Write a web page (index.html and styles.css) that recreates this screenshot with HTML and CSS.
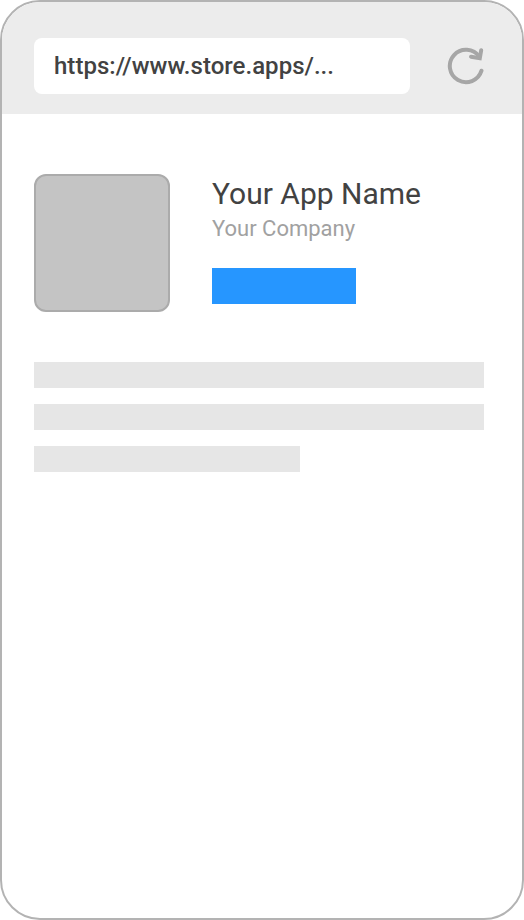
FILE: index.html
```html
<!DOCTYPE html>
<html lang="en">
<head>
<meta charset="utf-8">
<title>App store</title>
<link rel="stylesheet" href="styles.css">
</head>
<body>
<div class="phone">
  <header class="bar">
    <div class="address">https://www.store.apps/...</div>
    <svg class="reload" viewBox="0 0 40 40" fill="none" stroke="#a6a6a6" stroke-width="4" stroke-linecap="round" stroke-linejoin="miter">
      <path d="M35.5 24.7A16.2 16.2 0 1 1 33.3 10.7"/>
      <path d="M35.2 4.2L33.8 12.2L25 10.7"/>
    </svg>
  </header>
  <main class="content">
    <section class="app">
      <div class="app-icon"></div>
      <div class="details">
        <h1 class="name">Your App Name</h1>
        <p class="company">Your Company</p>
        <div class="button"></div>
      </div>
    </section>
    <section class="description">
      <div class="line"></div>
      <div class="line"></div>
      <div class="line line-short"></div>
    </section>
  </main>
</div>
</body>
</html>
```
FILE: styles.css
```css
* { box-sizing: border-box; }
body { margin: 0; background: #fff; font-family: Roboto, sans-serif; }
.phone { width: 524px; height: 920px; border: 2px solid #b3b3b3; border-radius: 40px; overflow: hidden; background: #fff; }
.bar { display: flex; height: 112px; padding: 36px 32px 0; background: #ececec; }
.address { width: 376px; height: 56px; padding-left: 20px; border-radius: 8px; background: #fff; color: #424242; font-size: 24px; font-weight: 500; line-height: 56px; letter-spacing: 0.03px; }
.reload { width: 40px; height: 40px; margin: 8px 0 0 36px; }
.content { padding: 60px 38px 0 32px; }
.app { display: flex; gap: 42px; height: 138px; }
.app-icon { width: 136px; height: 138px; border: 2px solid #ababab; border-radius: 12px; background: #c4c4c4; }
.name { margin: 0; color: #424242; font-size: 30px; font-weight: 400; line-height: 40px; }
.company { margin: 0; color: #a1a1a1; font-size: 22px; line-height: 30px; }
.button { width: 144px; height: 36px; margin-top: 24px; background: #2696ff; }
.description { display: grid; gap: 16px; margin-top: 50px; }
.line { height: 26px; background: #e6e6e6; }
.line-short { width: 266px; }
```
